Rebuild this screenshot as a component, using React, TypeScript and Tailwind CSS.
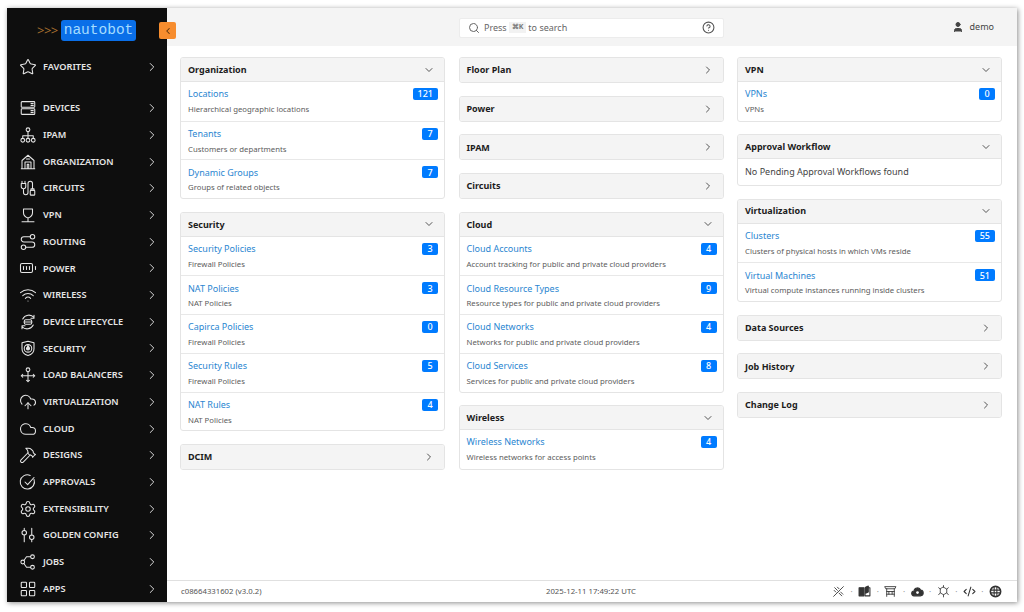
import { ReactNode } from "react";
import {
  Star,
  Route,
  BatteryFull,
  Wifi,
  CloudUpload,
  Cloud,
  Hammer,
  Settings,
  LayoutGrid,
  ChevronRight,
  ChevronDown,
  ChevronLeft,
  Search,
  CircleHelp,
  User,
  Code2,
} from "lucide-react";

const svgProps = {
  width: 18,
  height: 18,
  viewBox: "0 0 24 24",
  fill: "none",
  stroke: "currentColor",
  strokeWidth: 1.4,
  strokeLinecap: "round" as const,
  strokeLinejoin: "round" as const,
};

const footProps = { ...svgProps, width: 13, height: 13, strokeWidth: 2 };

const DevicesIcon = () => (
  <svg {...svgProps}>
    <rect x="3" y="3.500" width="18" height="7.500" rx="1" />
    <rect x="3" y="13" width="18" height="7.500" rx="1" />
    <path d="M16 6h3M16 8.500h3M16 15.500h3M16 18h3" />
  </svg>
);
const IpamIcon = () => (
  <svg {...svgProps}>
    <circle cx="12" cy="5" r="2.500" />
    <circle cx="5" cy="19" r="2.500" />
    <circle cx="12" cy="19" r="2.500" />
    <circle cx="19" cy="19" r="2.500" />
    <path d="M12 7.500v9M5 16.500V13h14v3.500" />
  </svg>
);
const OrgIcon = () => (
  <svg {...svgProps}>
    <path d="M3 21h18M4 21V10l8-7 8 7v11M8 21v-9h8v9M11 21v-6h2v6M10 8h4" />
  </svg>
);
const CircuitIcon = () => (
  <svg {...svgProps}>
    <path d="M4 3v3M8 3v3M3 6h6v4a3 3 0 0 1-6 0zM6 13v5a3 3 0 0 0 6 0V6a3 3 0 0 1 6 0v7" />
    <rect x="15" y="15" width="6" height="6.500" rx="1" />
    <path d="M16 13h4v2h-4z" />
  </svg>
);
const VpnIcon = () => (
  <svg {...svgProps}>
    <path d="M12 16c-3-1-6-3-6-7V4h12v5c0 4-3 6-6 7zM12 16v4M4 21h16" />
  </svg>
);
const LifecycleIcon = () => (
  <svg {...svgProps}>
    <path d="M5 8a9 9 0 0 1 15-2M19 16A9 9 0 0 1 4 18M20 3v4h-4M4 21v-4h4" />
    <rect x="7" y="9" width="10" height="6" rx="2" />
    <path d="M7 12h10" />
  </svg>
);
const SecurityIcon = () => (
  <svg {...svgProps}>
    <path d="M12 22c-4-1-8-4-8-9V5l8-2 8 2v8c0 5-4 8-8 9z" />
    <circle cx="12" cy="12.500" r="5" />
    <path
      d="M12 8.500c.6 1.500 2 2.200 2 4.200a2 2 0 0 1-4 0c0-.8.300-1.300.7-1.700.3.500.6.700.7.700 0-1.200-.1-2.100.6-3.200z"
      fill="currentColor"
    />
  </svg>
);
const BalancerIcon = () => (
  <svg {...svgProps}>
    <circle cx="12" cy="5" r="2.500" />
    <path d="M12 8v12M3 13h18M5 11l-2 2 2 2M19 11l2 2-2 2M10 19l2 2 2-2" />
  </svg>
);
const ApprovalIcon = () => (
  <svg {...svgProps}>
    <path d="M20 8.500A9.500 9.500 0 1 1 15 3.200" />
    <path d="M8 12l3.500 3.500L20 6" />
  </svg>
);
const ConfigIcon = () => (
  <svg {...svgProps}>
    <circle cx="7" cy="9" r="3" />
    <circle cx="17" cy="15" r="3" />
    <path d="M7 3v3M7 12v9M17 3v9M17 18v3" />
  </svg>
);
const JobsIcon = () => (
  <svg {...svgProps}>
    <circle cx="18" cy="5" r="2.500" />
    <circle cx="18" cy="19" r="2.500" />
    <circle cx="5" cy="12" r="2.500" />
    <path d="M15.500 5H10l-3.500 5M15.500 19H10l-3.500-5" />
  </svg>
);

// footer status icons
const WandIcon = () => (
  <svg {...footProps} strokeWidth={1.6}>
    <path d="M3 21L21 3M5 5l5 5M4 10l3 3M10 4l3 3M13 15l5 5M16 13l4 4" />
  </svg>
);
const BookIcon = () => (
  <svg {...footProps}>
    <path d="M2 5h9v15H2z" fill="currentColor" />
    <path d="M13 5h9v15h-9z" />
    <path d="M14 4l5-2v11l-5 2z" fill="currentColor" />
  </svg>
);
const GateIcon = () => (
  <svg {...footProps} strokeWidth={1.6}>
    <path d="M2 3h20l-2 4H4zM5 7v14M19 7v14M5 12h14M5 17h14M9 12v5M15 12v5" />
  </svg>
);
const CloudDotIcon = () => (
  <svg {...footProps}>
    <path
      d="M6 20a4.500 4.500 0 0 1-.5-9A6.500 6.500 0 0 1 18 9.500a5.300 5.300 0 0 1 0 10.500z"
      fill="currentColor"
    />
    <circle cx="12" cy="14" r="2.500" fill="white" stroke="none" />
  </svg>
);
const HexGearIcon = () => (
  <svg {...footProps} strokeWidth={1.5}>
    <path d="M12 4l6 3.500v7L12 18l-6-3.500v-7z" />
    <path d="M12 1v3M12 18v4M3 5l3 2.500M21 5l-3 2.500M3 18l3-3.500M21 18l-3-3.500" />
  </svg>
);
const RingIcon = () => (
  <svg {...footProps} strokeWidth={3}>
    <circle cx="12" cy="12" r="9.500" />
    <path d="M9.500 3v18M14.500 3v18M3 9.500h18M3 14.500h18" strokeWidth={2} />
  </svg>
);

const lucide = { size: 18, strokeWidth: 1.4 };

const navItems: { label: string; icon: ReactNode }[] = [
  { label: "DEVICES", icon: <DevicesIcon /> },
  { label: "IPAM", icon: <IpamIcon /> },
  { label: "ORGANIZATION", icon: <OrgIcon /> },
  { label: "CIRCUITS", icon: <CircuitIcon /> },
  { label: "VPN", icon: <VpnIcon /> },
  { label: "ROUTING", icon: <Route {...lucide} /> },
  { label: "POWER", icon: <BatteryFull {...lucide} /> },
  { label: "WIRELESS", icon: <Wifi {...lucide} /> },
  { label: "DEVICE LIFECYCLE", icon: <LifecycleIcon /> },
  { label: "SECURITY", icon: <SecurityIcon /> },
  { label: "LOAD BALANCERS", icon: <BalancerIcon /> },
  { label: "VIRTUALIZATION", icon: <CloudUpload {...lucide} /> },
  { label: "CLOUD", icon: <Cloud {...lucide} /> },
  { label: "DESIGNS", icon: <Hammer {...lucide} /> },
  { label: "APPROVALS", icon: <ApprovalIcon /> },
  { label: "EXTENSIBILITY", icon: <Settings {...lucide} /> },
  { label: "GOLDEN CONFIG", icon: <ConfigIcon /> },
  { label: "JOBS", icon: <JobsIcon /> },
  { label: "APPS", icon: <LayoutGrid {...lucide} /> },
];

type Item = { name: string; desc: string; count: number };

function NavRow({ label, icon }: { label: string; icon: ReactNode }) {
  return (
    <div className="h-[26.7px] flex items-center pl-[11px] pr-[8px] text-[#e6e6e6]">
      <div className="w-[20px] flex justify-center shrink-0">{icon}</div>
      <span className="ml-[5px] text-[9.2px] font-semibold flex-1 whitespace-nowrap">{label}</span>
      <ChevronRight size={14} strokeWidth={1.6} />
    </div>
  );
}

function Panel({ title, items, body }: { title: string; items?: Item[]; body?: string }) {
  const open = items || body;
  return (
    <div className="rounded-[3px] border border-[#e4e4e4] overflow-hidden bg-white">
      <div className={`h-[24px] bg-[#f4f4f4] flex items-center justify-between pl-[7px] pr-[9px] ${open ? "border-b border-[#e4e4e4]" : ""}`}>
        <span className="text-[9px] font-bold text-[#1c1c1c]">{title}</span>
        {open ? (
          <ChevronDown size={12} className="text-[#555]" />
        ) : (
          <ChevronRight size={12} className="text-[#555]" />
        )}
      </div>
      {body && <div className="h-[25.5px] flex items-center px-[7px] text-[9px] text-[#444]">{body}</div>}
      {items?.map((item, i) => (
        <div
          key={item.name}
          className={`h-[38.7px] pl-[7px] pr-[6px] pt-[5px] ${i > 0 ? "border-t border-[#e8e8e8]" : ""}`}
        >
          <div className="flex items-center justify-between h-[14px]">
            <span className="text-[9px] text-[#2a86d1]">{item.name}</span>
            <span className="h-[12px] min-w-[16px] px-[5px] rounded-[2px] bg-[#007bff] text-white text-[9px] font-medium flex items-center justify-center">
              {item.count}
            </span>
          </div>
          <div className="mt-[3px] text-[7.75px] text-[#5c5c5c] whitespace-nowrap">{item.desc}</div>
        </div>
      ))}
    </div>
  );
}

function Dot() {
  return <span className="text-[#999] text-[8px]">·</span>;
}

export default function App() {
  return (
    <div className="h-[612px] w-[1024px] bg-white pt-[8px] pl-[7px] pr-[7px] pb-[10px] font-['Noto_Sans',sans-serif]">
      <div className="relative h-full flex bg-white shadow-[1px_1px_5px_rgba(0,0,0,0.45)]">
        {/* Sidebar */}
        <aside className="w-[160px] shrink-0 bg-[#0e0e0e] flex flex-col">
          <div className="h-[46px] pt-[12px] flex items-start pl-[30px]">
            <span className="text-[#a86f2e] text-[13px] leading-[21px] tracking-[-0.5px] w-[24px] whitespace-nowrap">&gt;&gt;&gt;</span>
            <div className="w-[75px] h-[21px] rounded-[3px] bg-[#0a6fe8] text-[#a5dcff] text-[14.5px] flex items-center justify-center font-['Liberation_Mono',monospace]">
              nautobot
            </div>
          </div>
          <div className="h-[27px]">
            <NavRow label="FAVORITES" icon={<Star {...lucide} />} />
          </div>
          <div className="mt-[14px]">
            {navItems.map((item) => (
              <NavRow key={item.label} {...item} />
            ))}
          </div>
        </aside>

        {/* Collapse toggle */}
        <div className="absolute z-10 left-[152px] top-[14px] w-[17px] h-[17px] rounded-[2px] bg-[#f78d2e] flex items-center justify-center text-[#5a3310]">
          <ChevronLeft size={10} strokeWidth={2.5} />
        </div>

        <div className="flex-1 flex flex-col min-w-0">
          {/* Header */}
          <header className="h-[38px] bg-[#f4f4f4] relative flex items-center justify-center shrink-0">
            <div className="ml-[-1px] mt-[1px] w-[265px] h-[20px] rounded-[2px] bg-white border border-[#ececec] flex items-center pl-[8px] pr-[8px] text-[9px] text-[#666]">
              <Search size={12} className="text-[#666]" />
              <span className="ml-[4px]">Press</span>
              <span className="mx-[2px] px-[3px] bg-[#f2f2f2] text-[7px] font-bold text-[#777]">⌘K</span>
              <span className="flex-1">to search</span>
              <CircleHelp size={13} className="text-[#555]" />
            </div>
            <div className="absolute right-[23px] top-0 h-full flex items-center gap-[5px] text-[9px] text-[#444]">
              <User size={12} fill="#444" className="text-[#444]" />
              <span className="ml-[1px]">demo</span>
            </div>
          </header>

          {/* Panels */}
          <main className="flex-1 pt-[11px] pl-[13px] pr-[15px] grid grid-cols-3 gap-x-[13.5px] items-start">
            <div className="flex flex-col gap-[12.7px]">
              <Panel
                title="Organization"
                items={[
                  { name: "Locations", desc: "Hierarchical geographic locations", count: 121 },
                  { name: "Tenants", desc: "Customers or departments", count: 7 },
                  { name: "Dynamic Groups", desc: "Groups of related objects", count: 7 },
                ]}
              />
              <Panel
                title="Security"
                items={[
                  { name: "Security Policies", desc: "Firewall Policies", count: 3 },
                  { name: "NAT Policies", desc: "NAT Policies", count: 3 },
                  { name: "Capirca Policies", desc: "Firewall Policies", count: 0 },
                  { name: "Security Rules", desc: "Firewall Policies", count: 5 },
                  { name: "NAT Rules", desc: "NAT Policies", count: 4 },
                ]}
              />
              <Panel title="DCIM" />
            </div>
            <div className="flex flex-col gap-[12.7px]">
              <Panel title="Floor Plan" />
              <Panel title="Power" />
              <Panel title="IPAM" />
              <Panel title="Circuits" />
              <Panel
                title="Cloud"
                items={[
                  { name: "Cloud Accounts", desc: "Account tracking for public and private cloud providers", count: 4 },
                  { name: "Cloud Resource Types", desc: "Resource types for public and private cloud providers", count: 9 },
                  { name: "Cloud Networks", desc: "Networks for public and private cloud providers", count: 4 },
                  { name: "Cloud Services", desc: "Services for public and private cloud providers", count: 8 },
                ]}
              />
              <Panel
                title="Wireless"
                items={[{ name: "Wireless Networks", desc: "Wireless networks for access points", count: 4 }]}
              />
            </div>
            <div className="flex flex-col gap-[12.7px]">
              <Panel title="VPN" items={[{ name: "VPNs", desc: "VPNs", count: 0 }]} />
              <Panel title="Approval Workflow" body="No Pending Approval Workflows found" />
              <Panel
                title="Virtualization"
                items={[
                  { name: "Clusters", desc: "Clusters of physical hosts in which VMs reside", count: 55 },
                  { name: "Virtual Machines", desc: "Virtual compute instances running inside clusters", count: 51 },
                ]}
              />
              <Panel title="Data Sources" />
              <Panel title="Job History" />
              <Panel title="Change Log" />
            </div>
          </main>

          {/* Footer */}
          <footer className="h-[22px] shrink-0 border-t border-[#e0e0e0] relative flex items-center justify-between pl-[14px] pr-[15px] text-[7.75px] text-[#555]">
            <span>c08664331602 (v3.0.2)</span>
            <span className="absolute left-[379px]">2025-12-11 17:49:22 UTC</span>
            <div className="flex items-center gap-[5.5px] text-[#333]">
              <WandIcon />
              <Dot />
              <BookIcon />
              <Dot />
              <GateIcon />
              <Dot />
              <CloudDotIcon />
              <Dot />
              <HexGearIcon />
              <Dot />
              <Code2 size={13} />
              <Dot />
              <RingIcon />
            </div>
          </footer>
        </div>
      </div>
    </div>
  );
}
